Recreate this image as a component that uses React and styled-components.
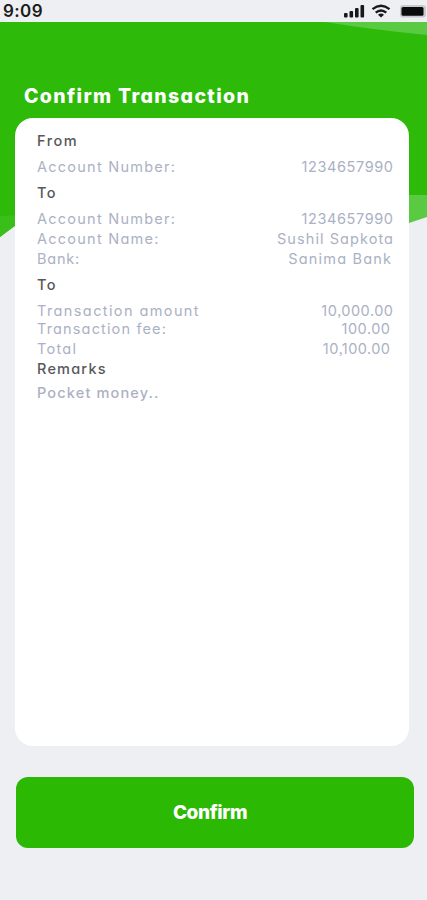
import React from 'react';
import styled, { createGlobalStyle } from 'styled-components';

const GlobalStyle = createGlobalStyle`
  * {
    box-sizing: border-box;
  }

  body {
    margin: 0;
    background: #edeff3;
    font-family: Inter, 'Open Sans', 'Liberation Sans', sans-serif;
    font-feature-settings: 'cv11', 'ss03';
  }
`;

const Screen = styled.main`
  position: relative;
  display: flex;
  flex-direction: column;
  width: 427px;
  height: 900px;
  overflow: hidden;
`;

const StatusBar = styled.header`
  display: flex;
  align-items: center;
  justify-content: space-between;
  height: 22px;
  padding: 0 1px 0 3px;
`;

const Clock = styled.time`
  color: #1c1c1e;
  font-size: 17px;
  font-weight: 600;
  line-height: 22px;
  letter-spacing: 0.4px;
`;

const StatusIcons = styled.svg`
  display: block;
`;

const Backdrop = styled.svg`
  position: absolute;
  top: 22px;
  left: 0;
  z-index: -1;
`;

const Title = styled.h1`
  margin: 61px 0 7.5px 24px;
  color: #fff;
  font-size: 19.5px;
  font-weight: 800;
  line-height: 27px;
  letter-spacing: 1.35px;
  white-space: nowrap;
`;

const Card = styled.section`
  display: flex;
  flex-direction: column;
  width: 394px;
  height: 628px;
  margin-left: 15px;
  padding: 14px 16px 0 22px;
  border-radius: 18px;
  background: #fff;
`;

const Heading = styled.h2`
  margin: ${({ $top }) => $top}px 0 0;
  color: #58585a;
  font-size: 14.5px;
  font-weight: 500;
  line-height: 18px;
  letter-spacing: ${({ $tracking = 1.5 }) => $tracking}px;
`;

const Line = styled.div`
  display: flex;
  justify-content: space-between;
  margin-top: ${({ $top }) => $top}px;
  padding-right: ${({ $inset = 0 }) => $inset}px;
  color: #abb1c4;
  font-size: 14.5px;
  font-weight: 400;
  line-height: 18px;
  white-space: nowrap;
`;

const Text = styled.span`
  letter-spacing: ${({ $tracking }) => $tracking}px;
  margin-right: -${({ $tracking }) => $tracking}px;
`;

const Remark = styled.p`
  margin: 6px 0 0;
  color: #abb1c4;
  font-size: 14.5px;
  font-weight: 500;
  line-height: 18px;
  letter-spacing: 1.15px;
`;

const ConfirmButton = styled.button`
  width: 398px;
  height: 71px;
  margin: 31px 0 0 16px;
  padding: 0 10px 0 0;
  border: 0;
  border-radius: 12px;
  background: #2bb904;
  color: #fff;
  font: inherit;
  font-size: 19px;
  font-weight: 800;
  letter-spacing: -0.4px;
`;

const Row = ({ label, value, top, inset, labelTracking = 1.25, valueTracking = 0.6 }) => (
  <Line $top={top} $inset={inset}>
    <Text $tracking={labelTracking}>{label}</Text>
    <Text $tracking={valueTracking}>{value}</Text>
  </Line>
);

const App = () => (
  <Screen>
    <GlobalStyle />
    <Backdrop width="427" height="216" viewBox="0 0 427 216">
      <path d="M0 0H427V195L240 150L15 203L0 215Z" fill="#2dba09" />
      <path d="M0 194L15 193V204L0 215Z" fill="#3abf1a" />
      <path d="M400 173H427V195L400 204Z" fill="#5bca43" />
      <path d="M325 0H427V13Q375 8 325 0Z" fill="#5bca43" />
    </Backdrop>
    <StatusBar>
      <Clock>9:09</Clock>
      <StatusIcons width="82" height="20" viewBox="0 0 82 20">
        <g fill="#19191b">
          <rect x="0" y="12" width="3.6" height="4.5" rx="1" />
          <rect x="5.5" y="10" width="3.6" height="6.5" rx="1" />
          <rect x="11" y="7" width="3.6" height="9.5" rx="1" />
          <rect x="16.5" y="4" width="3.6" height="12.5" rx="1" />
        </g>
        <g fill="none" stroke="#19191b" strokeWidth="2.3">
          <path d="M28.5 8.2Q37 1.4 45.5 8.2" />
          <path d="M31.7 11.7Q37 7.3 42.3 11.7" />
        </g>
        <path d="M34 13.7Q37 11.4 40 13.7L37 16.5Z" fill="#19191b" />
        <rect x="56" y="4" width="26" height="12.5" rx="3" fill="#c9cacd" />
        <rect x="57.5" y="6" width="22" height="8.7" rx="1.5" fill="#0b0b0c" />
      </StatusIcons>
    </StatusBar>
    <Title>Confirm Transaction</Title>
    <Card>
      <Heading $top={0}>From</Heading>
      <Row top={8} label="Account Number:" value="1234657990" />
      <Heading $top={8}>To</Heading>
      <Row top={8} label="Account Number:" value="1234657990" />
      <Row top={2} label="Account Name:" value="Sushil Sapkota" valueTracking={1.07} />
      <Row top={2} inset={2} label="Bank:" labelTracking={0.8} value="Sanima Bank" valueTracking={1.2} />
      <Heading $top={8}>To</Heading>
      <Row top={8} label="Transaction amount" labelTracking={1.4} value="10,000.00" valueTracking={0.5} />
      <Row top={0} inset={3} label="Transaction fee:" labelTracking={1.15} value="100.00" valueTracking={0.5} />
      <Row top={2} inset={3} label="Total" value="10,100.00" valueTracking={0.45} />
      <Heading $top={2} $tracking={1.2}>Remarks</Heading>
      <Remark>Pocket money..</Remark>
    </Card>
    <ConfirmButton type="button">Confirm</ConfirmButton>
  </Screen>
);

export default App;
